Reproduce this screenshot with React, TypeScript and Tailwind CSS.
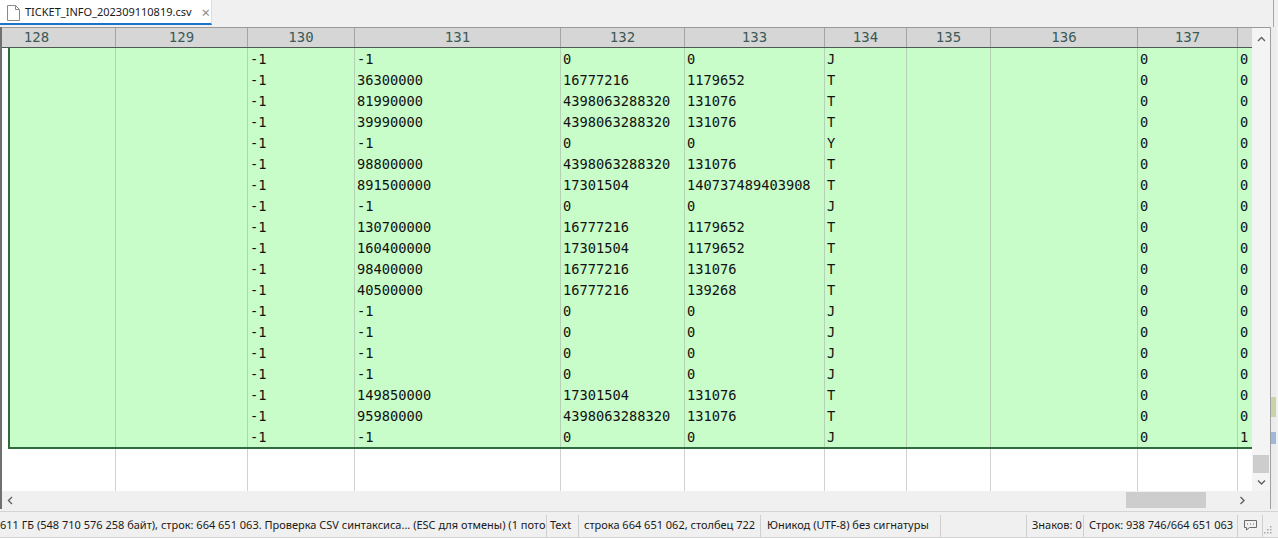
import React from "react";

const mono = "font-['DejaVu_Sans_Mono',monospace]";
const ui = "font-['Noto_Sans',sans-serif]";

const widths = [158, 132, 107, 206, 124, 140, 82, 84, 147, 100, 200];
const heads = ["128", "129", "130", "131", "132", "133", "134", "135", "136", "137", ""];

// columns 130..134, 137, 138
const data: string[][] = [
  ["-1", "-1", "0", "0", "J", "0", "0"],
  ["-1", "36300000", "16777216", "1179652", "T", "0", "0"],
  ["-1", "81990000", "4398063288320", "131076", "T", "0", "0"],
  ["-1", "39990000", "4398063288320", "131076", "T", "0", "0"],
  ["-1", "-1", "0", "0", "Y", "0", "0"],
  ["-1", "98800000", "4398063288320", "131076", "T", "0", "0"],
  ["-1", "891500000", "17301504", "140737489403908", "T", "0", "0"],
  ["-1", "-1", "0", "0", "J", "0", "0"],
  ["-1", "130700000", "16777216", "1179652", "T", "0", "0"],
  ["-1", "160400000", "17301504", "1179652", "T", "0", "0"],
  ["-1", "98400000", "16777216", "131076", "T", "0", "0"],
  ["-1", "40500000", "16777216", "139268", "T", "0", "0"],
  ["-1", "-1", "0", "0", "J", "0", "0"],
  ["-1", "-1", "0", "0", "J", "0", "0"],
  ["-1", "-1", "0", "0", "J", "0", "0"],
  ["-1", "-1", "0", "0", "J", "0", "0"],
  ["-1", "149850000", "17301504", "131076", "T", "0", "0"],
  ["-1", "95980000", "4398063288320", "131076", "T", "0", "0"],
  ["-1", "-1", "0", "0", "J", "0", "1"],
];

function toCells(r: string[]) {
  return ["", "", r[0], r[1], r[2], r[3], r[4], "", "", r[5], r[6]];
}

function FileIcon() {
  return (
    <svg className="shrink-0" width="13" height="16" viewBox="0 0 13 16" fill="none" stroke="#8a8a8a" strokeWidth="1">
      <path d="M0.5 0.5h8l4 4v11h-12z" fill="#fff" />
      <path d="M8.5 0.5v4h4" />
    </svg>
  );
}

function Chevron({ dir }: { dir: "up" | "down" | "left" | "right" }) {
  const d = {
    up: "M1 5l3.5-3.5L8 5",
    down: "M1 1.5L4.5 5 8 1.5",
    left: "M5 1L1.5 4.5 5 8",
    right: "M1.5 1L5 4.5 1.5 8",
  }[dir];
  const horiz = dir === "left" || dir === "right";
  return (
    <svg width={horiz ? 7 : 9} height={horiz ? 9 : 7} viewBox={horiz ? "0 0 7 9" : "0 0 9 7"} fill="none" stroke="#606060" strokeWidth="1.4">
      <path d={d} />
    </svg>
  );
}

export default function App() {
  return (
    <div className="flex h-[538px] w-[1278px] flex-col overflow-hidden bg-[#f0f0f0]">
      {/* tab bar */}
      <div className="flex h-[27px] shrink-0 items-start">
        <div className="flex h-[25px] w-[212px] items-center gap-[5px] border-r border-[#dcdcdc] border-b-[2px] border-b-[#1a73c8] bg-white pl-[7px] pt-[2px]">
          <FileIcon />
          <span className={`${ui} whitespace-nowrap text-[11px] text-[#1a1a1a]`}>TICKET_INFO_202309110819.csv</span>
          <span className="ml-[5px] text-[15px] leading-none text-[#8a8a8a]">×</span>
        </div>
        <div className="flex-1" />
        <div className="mr-[4px] h-full w-px bg-[#a8a8a8]" />
      </div>

      {/* grid area */}
      <div className="flex min-h-0 flex-1">
        <div className="w-[2px] bg-[#707070]" />
        <div className="flex w-[1268px] flex-col border-t border-[#9a9a9a] bg-white">
          <div className="flex min-h-0 flex-1">
            <div className="flex w-[1250px] flex-col overflow-hidden">
              {/* header */}
              <div className="-ml-[44px] flex h-[20px] shrink-0 border-b border-[#4d5a52] bg-[#d6d6d6]">
                {widths.map((wd, i) => (
                  <div
                    key={i}
                    style={{ width: wd }}
                    className={`${mono} flex shrink-0 items-center justify-center border-r border-[#a4a4a4] text-[14px] text-[#3b5a58]`}
                  >
                    {heads[i]}
                  </div>
                ))}
              </div>
              {/* selection */}
              <div className="ml-[6px] shrink-0 overflow-hidden border-b-2 border-l-2 border-[#2f6b3f] bg-[#c8fcc8]">
                {data.map((r, ri) => (
                  <div key={ri} className="-ml-[52px] flex h-[21px]">
                    {toCells(r).map((c, i) => (
                      <div
                        key={i}
                        style={{ width: widths[i] }}
                        className={`${mono} flex shrink-0 items-center whitespace-nowrap border-r border-[#b6d2b6] pl-[2px] pt-[2px] text-[13.7px] text-[#111]`}
                      >
                        {c}
                      </div>
                    ))}
                  </div>
                ))}
              </div>
              {/* empty rows below */}
              <div className="-ml-[44px] flex min-h-0 flex-1">
                {widths.map((wd, i) => (
                  <div key={i} style={{ width: wd }} className="shrink-0 border-r border-[#d2d2d2]" />
                ))}
              </div>
              {/* horizontal scrollbar */}
              <div className="flex h-[18px] shrink-0 items-center bg-[#f0f0f0]">
                <div className="flex w-[16px] justify-center">
                  <Chevron dir="left" />
                </div>
                <div className="flex flex-1 items-center">
                  <div className="ml-[1108px] h-[16px] w-[80px] bg-[#cdcdcd]" />
                </div>
                <div className="mr-[2px] flex w-[16px] justify-center">
                  <Chevron dir="right" />
                </div>
              </div>
            </div>
            {/* vertical scrollbar */}
            <div className="flex w-[18px] flex-col items-center bg-[#f4f4f4]">
              <div className="flex h-[22px] items-center">
                <Chevron dir="up" />
              </div>
              <div className="flex-1" />
              <div className="h-[18px] w-[16px] bg-[#cdcdcd]" />
              <div className="flex h-[18px] items-center">
                <Chevron dir="down" />
              </div>
              <div className="h-[18px] w-full bg-[#f0f0f0]" />
            </div>
          </div>
        </div>
        <div className="w-px bg-[#a0a0a0]" />
        <div className="flex w-[5px] flex-col bg-[#ececec]">
          <div className="h-[370px]" />
          <div className="h-[20px] bg-[#c9d3a8]" />
          <div className="h-[15px]" />
          <div className="h-[12px] bg-[#9fb7d8]" />
        </div>
      </div>

      {/* status bar */}
      <div className={`${ui} mt-[2px] flex h-[27px] shrink-0 items-center border-b border-t border-[#d4d4d4] pt-[2px] text-[11px] text-[#1a1a1a]`}>
        <div className="w-[546px] shrink-0 overflow-hidden whitespace-nowrap">
          611 ГБ (548 710 576 258 байт), строк: 664 651 063. Проверка CSV синтаксиса... (ESC для отмены) (1 поток)
        </div>
        <Sep />
        <div className="w-[31px] shrink-0 pl-[3px]">Text</div>
        <Sep />
        <div className="w-[181px] shrink-0 whitespace-nowrap pl-[5px]">строка 664 651 062, столбец 722</div>
        <Sep />
        <div className="w-[179px] shrink-0 whitespace-nowrap pl-[6px]">Юникод (UTF-8) без сигнатуры</div>
        <Sep />
        <div className="w-[85px] shrink-0" />
        <Sep />
        <div className="w-[56px] shrink-0 whitespace-nowrap pl-[5px]">Знаков: 0</div>
        <Sep />
        <div className="w-[153px] shrink-0 whitespace-nowrap pl-[5px]">Строк: 938 746/664 651 063</div>
        <Sep />
        <div className="flex w-[24px] shrink-0 justify-center">
          <svg width="13" height="11" viewBox="0 0 13 11" fill="none" stroke="#6a6a6a" strokeWidth="1">
            <path d="M0.5 0.5h12v7h-7l-3 2.5v-2.5h-2z" />
            <path d="M3 4h1M6 4h1M9 4h1" />
          </svg>
        </div>
        <Sep />
        <div className="flex flex-1 items-end justify-end self-stretch pb-[3px] pr-[6px]">
          <svg width="8" height="8" viewBox="0 0 8 8" fill="#a8a8a8">
            <rect x="6" y="0" width="1.5" height="1.5" />
            <rect x="3" y="3" width="1.5" height="1.5" />
            <rect x="6" y="3" width="1.5" height="1.5" />
            <rect x="0" y="6" width="1.5" height="1.5" />
            <rect x="3" y="6" width="1.5" height="1.5" />
            <rect x="6" y="6" width="1.5" height="1.5" />
          </svg>
        </div>
      </div>
    </div>
  );
}

function Sep() {
  return <div className="h-[22px] w-px shrink-0 bg-[#cfcfcf]" />;
}
